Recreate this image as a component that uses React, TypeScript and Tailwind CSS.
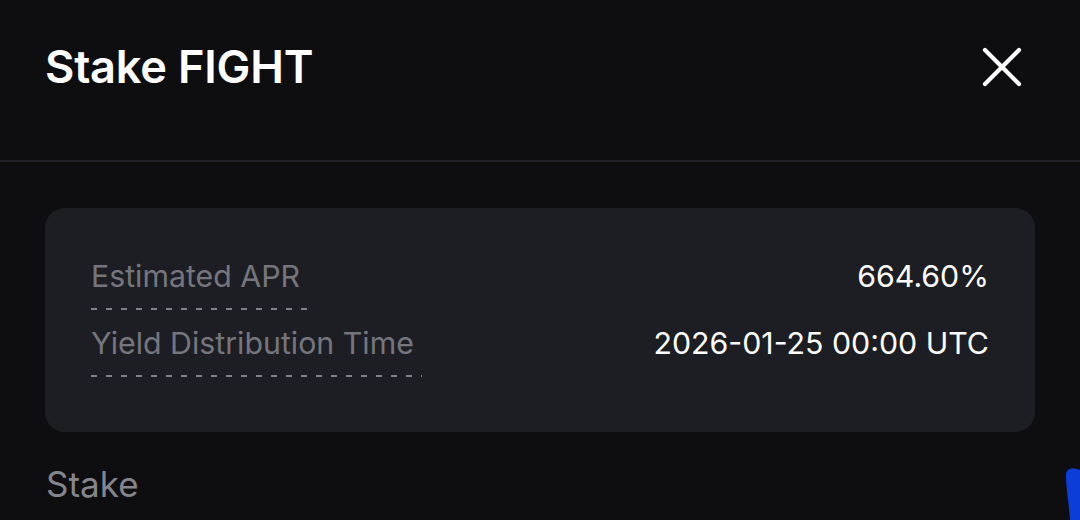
import React from "react";

export default function App() {
  return (
    <div
      className="relative w-[1080px] h-[520px] overflow-hidden bg-[#0e0e10] text-white"
      style={{ fontFamily: "Inter, 'Noto Sans', sans-serif" }}
    >
      <div className="flex items-start justify-between px-[45px] pt-[38px] h-[162px] border-b-2 border-[#1f2028]">
        <h1 className="text-[45.2px] leading-[58px] font-semibold tracking-[-0.005em] text-white">
          Stake FIGHT
        </h1>
        <button className="mt-[9px] mr-[13px]" aria-label="Close">
          <svg width="40" height="40" viewBox="0 0 40 40" fill="none">
            <path d="M3 3L37 37M37 3L3 37" stroke="white" strokeWidth="4.2" strokeLinecap="round" />
          </svg>
        </button>
      </div>

      <div className="mx-[45px] mt-[46px] rounded-[20px] bg-[#1d1e23] pt-[50px] pb-[55px] px-[46px]">
        <div className="flex items-start justify-between">
          <div className="inline-flex flex-col">
            <span className="text-[30.3px] leading-[36px] text-[#75767d]">Estimated APR</span>
            <span className="mt-[14px] h-[2px] w-[218px] bg-[linear-gradient(to_right,#80818a_6px,transparent_6px)] bg-[length:15px_2px]" />
          </div>
          <span className="text-[30.3px] leading-[36px] text-white">664.60%</span>
        </div>
        <div className="mt-[15px] flex items-start justify-between">
          <div className="inline-flex flex-col">
            <span className="text-[30.3px] leading-[36px] text-[#75767d]">Yield Distribution Time</span>
            <span className="mt-[14px] h-[2px] w-[331px] bg-[linear-gradient(to_right,#80818a_6px,transparent_6px)] bg-[length:15px_2px]" />
          </div>
          <span className="text-[30.3px] leading-[36px] text-white">2026-01-25 00:00 UTC</span>
        </div>
      </div>

      <div className="mt-[31px] px-[46px] text-[35px] leading-[42px] text-[#85858d]">Stake</div>

      <svg
        className="absolute left-[1060px] top-[466px]"
        width="20"
        height="54"
        viewBox="0 0 20 54"
      >
        <path d="M8 4 C10 2 14 2 20 4 L20 54 L10 54 C9 40 6 20 6 10 C6 7 6 6 8 4 Z" fill="#0b3ed8" />
      </svg>
    </div>
  );
}
